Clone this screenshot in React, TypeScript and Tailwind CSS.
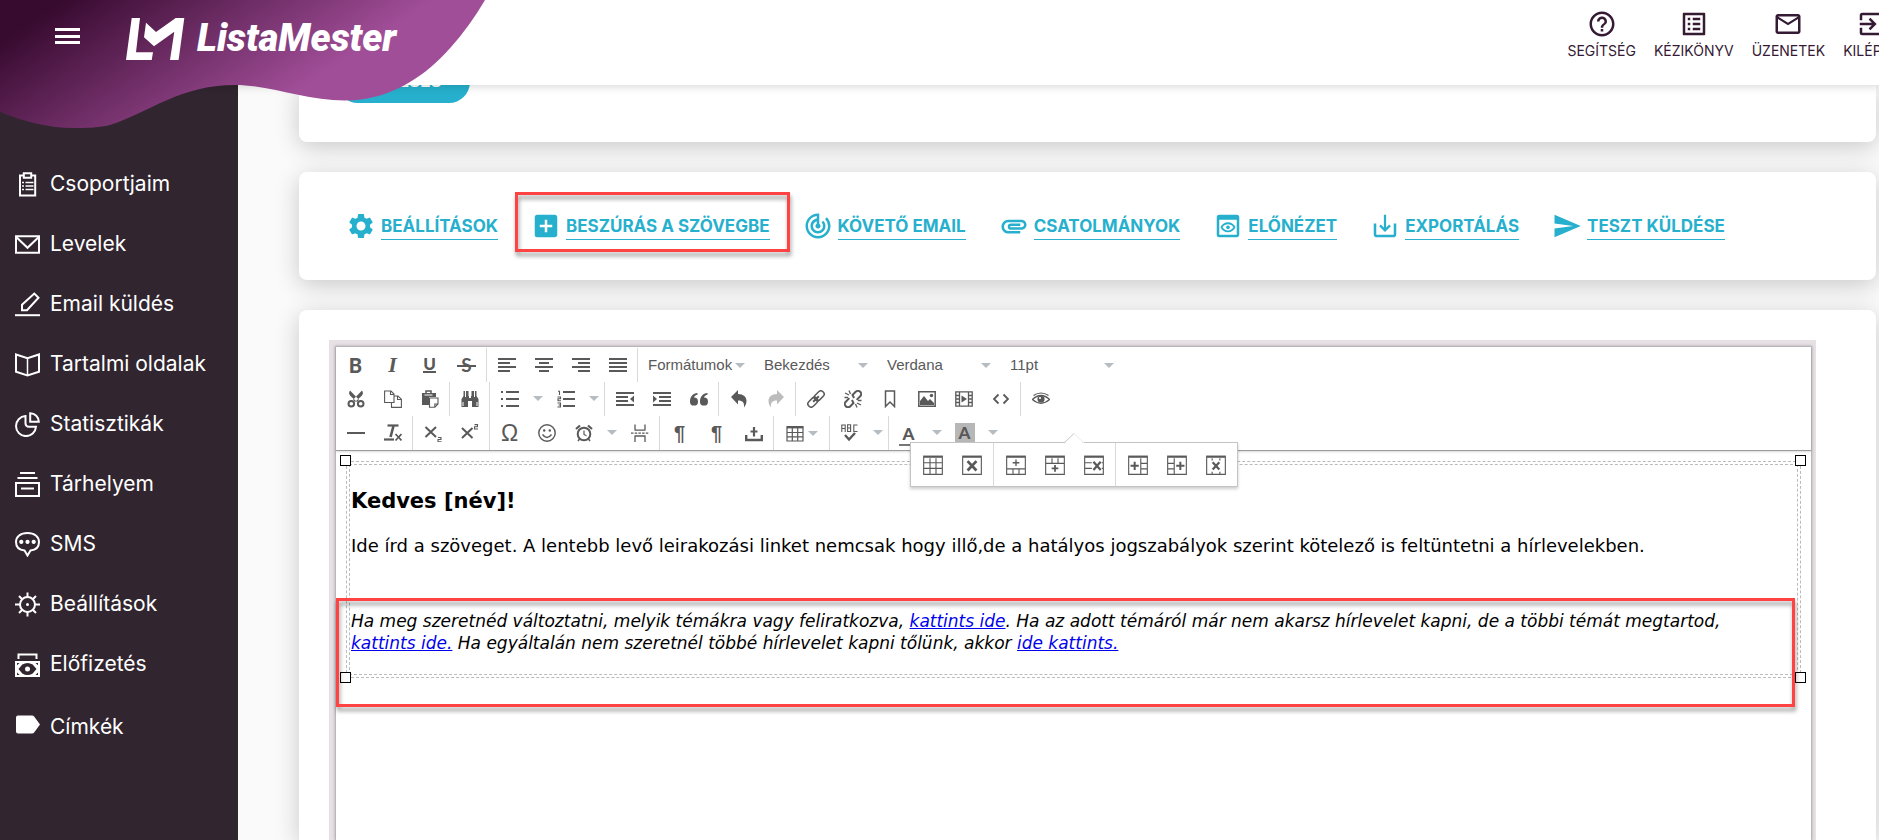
import React from "react";
import {
  MdAddBox,
  MdAttachment,
  MdExitToApp,
  MdHelpOutline,
  MdListAlt,
  MdMailOutline,
  MdOutlinePreview,
  MdSend,
  MdSettings,
  MdTrackChanges,
} from "react-icons/md";

type Kids = { children: React.ReactNode };

/* ---------- Sidebar ---------- */

function SideIcon({ children }: Kids) {
  return (
    <svg viewBox="0 0 25 25" className="size-[25px] shrink-0" fill="none" stroke="currentColor" strokeWidth="2" aria-hidden="true">
      {children}
    </svg>
  );
}

const sideItems: { label: string; icon: React.ReactNode }[] = [
  {
    label: "Csoportjaim",
    icon: (
      <>
        <path d="M8 3.500H5v20h15.200v-20H17" />
        <path d="M8.800 1.200h7.400v4.600H8.800z" />
        <path d="M7 10.500h2M10.500 10.500h8M7 14h2M10.500 14h8M7 17.500h2M10.500 17.500h8" strokeWidth="1.600" />
      </>
    ),
  },
  {
    label: "Levelek",
    icon: (
      <>
        <path d="M1 4.200h23v16.600H1z" />
        <path d="M1.500 5.200l11 10.600 11-10.600" />
      </>
    ),
  },
  {
    label: "Email küldés",
    icon: (
      <>
        <path d="M0 23.200h25" />
        <path d="M7 18.200v-5.400L19.300 1.600l4.200 4.200L12 18.200z" />
      </>
    ),
  },
  {
    label: "Tartalmi oldalak",
    icon: (
      <>
        <path d="M1 2.500l11.500 3.800L24 2.500v17.200l-11.500 3.800L1 19.700z" />
        <path d="M12.500 6v17.500" strokeWidth="1.500" />
      </>
    ),
  },
  {
    label: "Statisztikák",
    icon: (
      <>
        <path d="M10.500 4.100A10 10 0 1 0 21 14.800h-7.200a3.300 3.300 0 0 1-3.300-3.300z" />
        <path d="M15.200 1.200v8.600h8.600a8.600 8.600 0 0 0-8.600-8.600z" />
      </>
    ),
  },
  {
    label: "Tárhelyem",
    icon: (
      <>
        <path d="M5 1h15M2.500 6h20" />
        <path d="M1 11h23v13H1z" />
        <path d="M6 16.500h13" />
      </>
    ),
  },
  {
    label: "SMS",
    icon: (
      <>
        <path d="M12.500 1C5.500 1 1 4.600 1 10s3.500 8 8.500 8.500l3 5 3-5C20.500 18 24 15.400 24 10s-4.500-9-11.500-9z" />
        <path d="M6.300 7.800a2.100 2.100 0 1 0 .01 0zM12.500 7.800a2.100 2.100 0 1 0 .01 0zM18.700 7.800a2.100 2.100 0 1 0 .01 0z" fill="currentColor" stroke="none" />
      </>
    ),
  },
  {
    label: "Beállítások",
    icon: (
      <>
        <circle cx="12.500" cy="12.500" r="7.500" />
        <circle cx="12.500" cy="12.500" r="1.500" fill="currentColor" stroke="none" />
        <path d="M12.500 5V.5M12.500 20v4.500M5 12.500H0M20 12.500h5M7.200 7.200L4 4M17.800 7.200L21 4M7.200 17.800L4 21M17.800 17.800L21 21" />
      </>
    ),
  },
  {
    label: "Előfizetés",
    icon: (
      <>
        <path d="M3.500 7V2.500h18V7" />
        <path fillRule="evenodd" stroke="none" fill="currentColor" d="M0 9h25v16H0zM2 11v2.200L4.500 11zM20.500 11l2.500 2.200V11zM2 20.600V23h2.500zM23 20.600L20.500 23H23zM3.500 17l3.800-4.500Q12.500 9.500 17.700 12.500L21.500 17l-3.800 4.500Q12.500 24.500 7.300 21.500z" />
        <circle cx="12.500" cy="17" r="2.500" fill="currentColor" stroke="none" />
      </>
    ),
  },
  {
    label: "Címkék",
    icon: <path d="M3 .5h14q1.500 0 2.300 1.200L25 9.500l-5.700 7.800Q18.500 18.500 17 18.500H3q-2 0-2-2v-14q0-2 2-2z" fill="currentColor" stroke="none" />,
  },
];

function Sidebar() {
  return (
    <nav className="w-[238px] shrink-0 bg-[#31252f] pt-[69px] text-white" aria-label="Főmenü">
      <ul>
        {sideItems.map((it) => (
          <li key={it.label} className="group">
            <a href="#" className="flex h-[60px] items-center gap-[10px] pl-[15px] text-[21px] leading-6 group-last:h-[66px]">
              <SideIcon>{it.icon}</SideIcon>
              {it.label}
            </a>
          </li>
        ))}
      </ul>
    </nav>
  );
}

/* ---------- Header ---------- */

const topLinks = [
  { label: "SEGÍTSÉG", Icon: MdHelpOutline },
  { label: "KÉZIKÖNYV", Icon: MdListAlt },
  { label: "ÜZENETEK", Icon: MdMailOutline },
  { label: "KILÉPÉS", Icon: MdExitToApp },
];

function Header() {
  return (
    <header className="relative z-20 h-[85px] shrink-0 bg-white shadow-[0_2px_8px_rgba(0,0,0,0.15)]">
      <svg className="absolute left-0 top-0 h-[130px] w-[486px]" viewBox="0 0 486 130" aria-hidden="true">
        <defs>
          <linearGradient id="wave" gradientUnits="userSpaceOnUse" x1="19" y1="29" x2="133" y2="201">
            <stop offset="0" stopColor="#370a2f" />
            <stop offset="1" stopColor="#a14e98" />
          </linearGradient>
        </defs>
        <path
          fill="url(#wave)"
          d="M0 0H485C465 34 438 66 410 82C392 93 370 100.500 345 100.500C305 100.500 270 85 235 85C180 85 150 112 110 125C97 128 84 128 75 128C45 128 20 120 0 112Z"
        />
      </svg>
      <div className="relative flex h-full items-start overflow-hidden">
        <button type="button" aria-label="Menü" className="ml-[55px] mt-7 flex h-4 w-[25px] flex-col justify-between">
          <span className="h-[3px] w-full bg-white" />
          <span className="h-[3px] w-full bg-white" />
          <span className="h-[3px] w-full bg-white" />
        </button>
        <a href="#" className="ml-[46px] mt-[17px] flex h-[43px] items-center gap-3 text-white">
          <svg viewBox="0 0 59 43" className="h-[43px] w-[59px]" fill="currentColor" aria-hidden="true">
            <path d="M5.700 1H14l-4 34.300h17L25.700 43H0z" />
            <path d="M20 5.700l10 9.300L49.700 1h8.600l-5.700 42H44l4.300-28.300L28 29.300l-10-9z" />
          </svg>
          <span className="font-[Roboto,sans-serif] text-[38px] font-black italic leading-[43px]">ListaMester</span>
        </a>
        <nav aria-label="Felső menü" className="-mr-[20px] ml-auto mt-[9px] flex shrink-0 gap-[18px] text-[#351a33]">
          {topLinks.map(({ label, Icon }) => (
            <a key={label} href="#" className="flex flex-col items-center text-[14px] leading-6">
              <Icon className="size-[30px]" aria-hidden="true" />
              {label}
            </a>
          ))}
        </nav>
      </div>
    </header>
  );
}

/* ---------- Action links ---------- */

function ExportIcon({ className }: { className?: string }) {
  return (
    <svg viewBox="0 0 24 24" className={className} fill="none" stroke="currentColor" strokeWidth="2" aria-hidden="true">
      <path d="M4 10v8.500A1.500 1.500 0 0 0 5.500 20h13a1.500 1.500 0 0 0 1.500-1.500V10" />
      <path d="M12 3v12M8 11.500l4 4 4-4" strokeWidth="1.800" />
    </svg>
  );
}

const actions = [
  { label: "BEÁLLÍTÁSOK", Icon: MdSettings },
  { label: "BESZÚRÁS A SZÖVEGBE", Icon: MdAddBox, marked: true },
  { label: "KÖVETŐ EMAIL", Icon: MdTrackChanges },
  { label: "CSATOLMÁNYOK", Icon: MdAttachment },
  { label: "ELŐNÉZET", Icon: MdOutlinePreview },
  { label: "EXPORTÁLÁS", Icon: ExportIcon },
  { label: "TESZT KÜLDÉSE", Icon: MdSend },
];

function Actions() {
  return (
    <section className="mt-[30px] flex h-[108px] shrink-0 items-center gap-[33px] rounded-lg bg-white pl-[47px] text-[#26b0cd] shadow-[0_5px_25px_rgba(0,0,0,0.2)]">
      {actions.map(({ label, Icon, marked }) => (
        <a key={label} href="#" className="relative flex shrink-0 items-center gap-[5px]">
          <Icon className="size-[30px]" aria-hidden="true" />
          <span className="border-b border-current pt-px text-[17px] font-bold leading-[26px]">{label}</span>
          {marked && (
            <span className="pointer-events-none absolute -bottom-[11px] -left-4 -right-[20px] -top-[19px] border-[3px] border-[#ff4343] drop-shadow-[1px_4px_2px_rgba(0,0,0,0.4)]" />
          )}
        </a>
      ))}
    </section>
  );
}

/* ---------- Editor toolbar ---------- */

function Glyph({ children }: Kids) {
  return (
    <svg viewBox="0 0 18 18" className="size-[18px]" fill="none" stroke="currentColor" strokeWidth="1.500" aria-hidden="true">
      {children}
    </svg>
  );
}

function Bars({ d }: { d: string }) {
  return (
    <Glyph>
      <path d={d} strokeWidth="2" />
    </Glyph>
  );
}

function Btn({ label, children, dim }: Kids & { label: string; dim?: boolean }) {
  return (
    <button type="button" aria-label={label} className={"flex h-[34px] w-[37px] items-center justify-center " + (dim ? "opacity-40" : "")}>
      {children}
    </button>
  );
}

function Caret() {
  return <span className="block h-0 w-0 border-x-[5px] border-t-[5px] border-x-transparent border-t-[#b5bcc2]" />;
}

function Split({ label, children }: Kids & { label: string }) {
  return (
    <div className="flex">
      <Btn label={label}>{children}</Btn>
      <button type="button" aria-label={label + " – lehetőségek"} className="flex h-8 w-[19px] items-center justify-center">
        <Caret />
      </button>
    </div>
  );
}

function Group({ children }: Kids) {
  return <div className="flex border-l border-[#d9d9d9] px-px first:border-l-0">{children}</div>;
}

function Pick({ label, value, width }: { label: string; value: string; width: string }) {
  return (
    <label className={"relative flex items-center " + width}>
      <select aria-label={label} defaultValue={value} className="h-[34px] w-full appearance-none bg-transparent pl-[9px] text-[15px] outline-none">
        <option>{value}</option>
      </select>
      <span className="pointer-events-none absolute right-[10px]">
        <Caret />
      </span>
    </label>
  );
}

const grid = "M1 4v13h16V4M1 8.500h16M1 12.800h16M6.300 4v13M11.700 4v13";

function Toolbar() {
  return (
    <div className="border-b border-[#9b9b9b] bg-white pt-px font-['Liberation_Sans',Arial,sans-serif] text-[#595959] shadow-[0_1px_2px_rgba(0,0,0,0.15)]">
      <div className="flex h-[34px]">
        <Group>
          <Btn label="Félkövér"><span className="font-[Lato,sans-serif] text-[20px] font-black leading-5">B</span></Btn>
          <Btn label="Dőlt"><span className="font-['Liberation_Serif',serif] text-[22px] font-bold italic leading-5">I</span></Btn>
          <Btn label="Aláhúzott"><span className="border-b-2 border-current font-[Lato,sans-serif] text-[17px] font-black leading-[14px]">U</span></Btn>
          <Btn label="Áthúzott">
            <span className="relative font-[Lato,sans-serif] text-[19px] font-bold leading-5">
              S
              <span className="absolute -inset-x-1 top-[10px] h-[2px] bg-current" />
            </span>
          </Btn>
        </Group>
        <Group>
          <Btn label="Balra igazít"><Bars d="M0 3h18M0 7h12M0 11h18M0 15h12" /></Btn>
          <Btn label="Középre igazít"><Bars d="M0 3h18M4 7h10M0 11h18M4 15h10" /></Btn>
          <Btn label="Jobbra igazít"><Bars d="M0 3h18M6 7h12M0 11h18M6 15h12" /></Btn>
          <Btn label="Sorkizárt"><Bars d="M0 3h18M0 7h18M0 11h18M0 15h18" /></Btn>
        </Group>
        <Group>
          <Pick label="Formátumok" value="Formátumok" width="w-[116px]" />
          <Pick label="Bekezdés" value="Bekezdés" width="w-[123px]" />
          <Pick label="Betűtípus" value="Verdana" width="w-[123px]" />
          <Pick label="Betűméret" value="11pt" width="w-[123px]" />
        </Group>
      </div>

      <div className="flex h-[34px]">
        <Group>
          <Btn label="Kivágás">
            <Glyph>
              <path d="M3 .5C1.500 2.500 2 4.500 3.500 6L10 12l2-2.200zM15 .5C16.500 2.500 16 4.500 14.500 6L8 12 6 9.800z" fill="currentColor" stroke="none" />
              <circle cx="4.300" cy="13.700" r="2.800" strokeWidth="2" />
              <circle cx="13.700" cy="13.700" r="2.800" strokeWidth="2" />
            </Glyph>
          </Btn>
          <Btn label="Másolás">
            <Glyph>
              <path d="M.6 1h6.400l3 3v8.500H.6zM6.500 1v3.500H10M10 6h4l3.400 3.200V17.400H7.500v-5M13.500 6v3.500h3.800" strokeWidth="1.100" />
            </Glyph>
          </Btn>
          <Btn label="Beillesztés">
            <Glyph>
              <path d="M1 3h14v4H8v8H1z" fill="currentColor" stroke="none" />
              <path d="M5 3V1h5v2" />
              <path d="M3.500 5h8" stroke="#fff" strokeWidth="1" />
              <path d="M8.500 8h8.500v6l-3.200 3.300H8.500zM17 14h-3.200v3.300" strokeWidth="1.100" />
            </Glyph>
          </Btn>
        </Group>
        <Group>
          <Btn label="Keresés">
            <Glyph>
              <path d="M2.500 1h5v5H8v2h2V6h.5V1h5v5L17.500 9v8H11v-6H7v6H.5V9L2.500 6z" fill="currentColor" stroke="none" />
              <path d="M4.500 1v6M13.500 1v6M2 12v4M16 12v4" stroke="#fff" strokeWidth="1" />
            </Glyph>
          </Btn>
        </Group>
        <Group>
          <Split label="Felsorolás"><Bars d="M0 2h2M5 2h13M0 9h2M5 9h13M0 16h2M5 16h13" /></Split>
          <Split label="Számozás">
            <Glyph>
              <path d="M6 2h12M6 9h12M6 16h12" strokeWidth="2" />
              <path d="M1 1.200h1.500V5M.5 7h3v1.800H1v2h3M.5 13h3v4H.5M1.500 15h2" strokeWidth="1.100" />
            </Glyph>
          </Split>
        </Group>
        <Group>
          <Btn label="Behúzás csökkentése">
            <Glyph>
              <path d="M0 3h18M0 7h12M0 11h12M0 15h18" strokeWidth="2" />
              <path d="M18 5.500v7L14 9z" fill="currentColor" stroke="none" />
            </Glyph>
          </Btn>
          <Btn label="Behúzás növelése">
            <Glyph>
              <path d="M0 3h18M6 7h12M6 11h12M0 15h18" strokeWidth="2" />
              <path d="M0 5.500v7L4 9z" fill="currentColor" stroke="none" />
            </Glyph>
          </Btn>
          <Btn label="Idézet">
            <Glyph>
              <path d="M7.500 3C3 3.500 0 6.500 0 11.500A4 4 0 1 0 4 7.600C4.500 6 5.600 5 7.500 4.800zM17.500 3C13 3.500 10 6.500 10 11.500a4 4 0 1 0 4-3.900c.5-1.600 1.600-2.600 3.500-2.800z" fill="currentColor" stroke="none" />
            </Glyph>
          </Btn>
        </Group>
        <Group>
          <Btn label="Visszavonás">
            <Glyph>
              <path d="M8 0v4c5.500 0 8.500 3 8.500 7 0 2.500-1 4.500-2.500 6.500.5-4.500-1-7-6-7v4L1 7z" fill="currentColor" stroke="none" />
            </Glyph>
          </Btn>
          <Btn label="Ismét" dim>
            <Glyph>
              <path d="M10 0v4C4.500 4 1.500 7 1.500 11c0 2.500 1 4.500 2.500 6.500-.5-4.500 1-7 6-7v4L17 7z" fill="currentColor" stroke="none" />
            </Glyph>
          </Btn>
        </Group>
        <Group>
          <Btn label="Hivatkozás">
            <Glyph>
              <g transform="rotate(-45 9 9)">
                <rect x="-1" y="5.800" width="11" height="6.400" rx="3" />
                <rect x="8" y="5.800" width="11" height="6.400" rx="3" />
                <path d="M5 9h8" strokeWidth="2" />
              </g>
            </Glyph>
          </Btn>
          <Btn label="Hivatkozás törlése">
            <Glyph>
              <g transform="rotate(-45 9 9)">
                <path d="M7 5.800H2a3.200 3.200 0 0 0 0 6.400h4.500L7.500 9M11 12.200h5a3.200 3.200 0 0 0 0-6.400h-4.500L10.500 9" strokeWidth="2" />
              </g>
              <path d="M1 3l4 2M5 .5l1.500 3.500M.5 7.500H4M17 15l-4-2M13 17.500L11.500 14M17.500 10.500H14" strokeWidth="1.300" />
            </Glyph>
          </Btn>
          <Btn label="Könyvjelző"><Glyph><path d="M4.500 1h9v15.500L9 12l-4.500 4.500z" /></Glyph></Btn>
          <Btn label="Kép">
            <Glyph>
              <path d="M.8 1.800h16.400v14.400H.8z" />
              <path d="M2 15V11l4-5 4 5 2-2 4 4v2z" fill="currentColor" stroke="none" />
              <circle cx="13.500" cy="5.500" r="1.700" fill="currentColor" stroke="none" />
            </Glyph>
          </Btn>
          <Btn label="Média">
            <Glyph>
              <path d="M.8 1.800h16.400v14.400H.8zM4.500 1.800v14.400M13.500 1.800v14.400M1 5.500h3.500M1 9h3.500M1 12.500h3.500M13.500 5.500H17M13.500 9H17M13.500 12.500H17" strokeWidth="1.300" />
              <path d="M6.500 5.500v7L12 9z" fill="currentColor" stroke="none" />
            </Glyph>
          </Btn>
          <Btn label="Forráskód"><Glyph><path d="M6.500 4.500L2 9l4.500 4.500M11.500 4.500L16 9l-4.500 4.500" strokeWidth="1.800" /></Glyph></Btn>
        </Group>
        <Group>
          <Btn label="Előnézet">
            <Glyph>
              <path d="M.3 9.500Q9 1.500 17.700 9.500Q9 17 .3 9.500z" strokeWidth="1.300" />
              <path d="M1.500 5.500Q9 .5 16.500 5.500" strokeWidth="1.200" />
              <circle cx="9" cy="9" r="3.600" fill="currentColor" stroke="none" />
              <circle cx="8" cy="8" r="1.100" fill="#fff" stroke="none" />
            </Glyph>
          </Btn>
        </Group>
      </div>

      <div className="flex h-[34px]">
        <Group>
          <Btn label="Vízszintes vonal"><Bars d="M0 9h18" /></Btn>
          <Btn label="Formázás törlése">
            <Glyph>
              <path d="M3.500 1.500h11" strokeWidth="2.200" />
              <path d="M9.500 2L6.500 13" strokeWidth="2.600" />
              <path d="M0 15.500h10" strokeWidth="2.200" />
              <path d="M11.500 10l6 6.500M17.500 10l-6 6.500" strokeWidth="1.700" />
            </Glyph>
          </Btn>
        </Group>
        <Group>
          <Btn label="Alsó index">
            <Glyph>
              <path d="M1.500 3l10.500 10M12 3L1.500 13" strokeWidth="2" />
              <path d="M14 13.500h3v2h-3v2.300h3.500" strokeWidth="1.100" />
            </Glyph>
          </Btn>
          <Btn label="Felső index">
            <Glyph>
              <path d="M1 4l10.500 10M11.500 4L1 14" strokeWidth="2" />
              <path d="M13.500.6h3v2.200h-3V5H17" strokeWidth="1.100" />
            </Glyph>
          </Btn>
        </Group>
        <Group>
          <Btn label="Speciális karakter"><span className="font-['Liberation_Sans',sans-serif] text-[23px] leading-6">Ω</span></Btn>
          <Btn label="Hangulatjel">
            <Glyph>
              <circle cx="9" cy="9" r="8.200" strokeWidth="1.400" />
              <path d="M4.500 10.500Q9 16.500 13.500 10.500" strokeWidth="1.400" />
              <circle cx="6.200" cy="6.500" r="1.200" fill="currentColor" stroke="none" />
              <circle cx="11.800" cy="6.500" r="1.200" fill="currentColor" stroke="none" />
            </Glyph>
          </Btn>
          <Split label="Dátum beszúrása">
            <Glyph>
              <circle cx="9" cy="10" r="6.300" strokeWidth="2" />
              <path d="M9 6.500V10.500l2.500 1.300" strokeWidth="1.200" />
              <path d="M1 5l4-3.500M17 5l-4-3.500" strokeWidth="2.200" />
              <path d="M4.500 15L3 17M13.500 15l1.500 2" />
            </Glyph>
          </Split>
          <Btn label="Oldaltörés">
            <Glyph>
              <path d="M4 .5V6M14 .5V6M3.500 6.200h11M3.500 12h11M4 12v6M14 12v6" strokeWidth="1.300" />
              <path d="M0 9.200h18" strokeDasharray="2.500 1.200" strokeWidth="1.300" />
            </Glyph>
          </Btn>
        </Group>
        <Group>
          <Btn label="Balról jobbra"><span className="font-['Liberation_Sans',sans-serif] text-[20px] font-bold leading-5">¶</span></Btn>
          <Btn label="Jobbról balra"><span className="font-['Liberation_Sans',sans-serif] text-[20px] font-bold leading-5">¶</span></Btn>
          <Btn label="Feltöltés">
            <Glyph>
              <path d="M1.200 11v5h15.600v-5" strokeWidth="2.400" />
              <path d="M9 3v9.500M5.500 7.500h7" strokeWidth="2.200" />
            </Glyph>
          </Btn>
        </Group>
        <Group>
          <button type="button" aria-label="Táblázat" className="flex h-[34px] w-[53px] items-center justify-center">
            <Glyph>
              <path d={grid} strokeWidth="1.200" />
              <path d="M.4 3.200h17.200" strokeWidth="2.400" />
            </Glyph>
            <span className="ml-1"><Caret /></span>
          </button>
        </Group>
        <Group>
          <Split label="Helyesírás">
            <Glyph>
              <path d="M.8 8V1h3.400v7M.8 4.500h3.400M6.600.8h3v6.700h-3zM6.600 4h3M16.500 1h-3.700v6.500h3.700" strokeWidth="1.100" />
              <path d="M4 11l4 4.500L14 9" strokeWidth="2.400" />
            </Glyph>
          </Split>
        </Group>
        <Group>
          <Split label="Szövegszín">
            <span className="mt-1 border-b-2 border-[#777] px-1 font-[Lato,sans-serif] text-[17px] font-black leading-5">A</span>
          </Split>
          <Split label="Háttérszín">
            <span className="size-5 bg-[#b7b7b7] font-[Lato,sans-serif] text-[17px] font-black leading-5">A</span>
          </Split>
        </Group>
      </div>
    </div>
  );
}

/* ---------- Floating table toolbar ---------- */

const tableTools: { label: string; d: string; mark: string; w: string }[][] = [
  [
    { label: "Táblázat tulajdonságai", d: "M.6 2v15.400h16.800V2M.6 7h16.800M.6 12h16.800M6.300 3v14M11.700 3v14", mark: "", w: "1" },
    { label: "Táblázat törlése", d: "M.6 2v15.400h16.800V2", mark: "M5 5.500l8 8.500M13 5.500L5 14", w: "2.500" },
  ],
  [
    { label: "Sor beszúrása elé", d: "M.6 2v15.400h16.800V2M.6 12.500h16.800M6.300 12.500v5M11.700 12.500v5", mark: "M9 4v6M6 7h6", w: "1.200" },
    { label: "Sor beszúrása mögé", d: "M.6 2v15.400h16.800V2M.6 7.500h16.800M6.300 3v4.500M11.700 3v4.500", mark: "M9 9v6M6 12h6", w: "1.600" },
    { label: "Sor törlése", d: "M.6 2v15.400h16.800V2M.6 7h6.500M.6 12h6.500M16 7h1.500M16 12h1.500", mark: "M8.500 6l6.500 7.500M15 6l-6.500 7.500", w: "2" },
  ],
  [
    { label: "Oszlop beszúrása elé", d: "M.6 2v15.400h16.800V2M11.500 3v14M11.500 7.500h6M11.500 12.500h6", mark: "M6 6v7.500M2.300 9.700h7.400", w: "1.800" },
    { label: "Oszlop beszúrása mögé", d: "M.6 2v15.400h16.800V2M6.500 3v14M.6 7.500h6M.6 12.500h6", mark: "M12 6v7.500M8.300 9.700h7.400", w: "1.800" },
    { label: "Oszlop törlése", d: "M.6 2v15.400h16.800V2M5.500 3v2M12.500 3v2M5.500 15v2M12.500 15v2", mark: "M6 6.500l6 6.500M12 6.500L6 13", w: "2" },
  ],
];

function TablePopup() {
  return (
    <div role="toolbar" aria-label="Táblázat eszközök" className="absolute left-[574px] top-[95px] z-10 flex h-[45px] border border-[#c4c4c4] bg-white text-[#595959] shadow-[0_2px_3px_rgba(0,0,0,0.2)]">
      <svg viewBox="0 0 20 11" className="absolute -top-[10px] left-[153px] h-[11px] w-5" aria-hidden="true">
        <path d="M0 11L10 .5 20 11z" fill="#fff" />
        <path d="M0 10L10 .5" stroke="#c4c4c4" />
        <path d="M10 .5L20 10" stroke="#ececec" />
      </svg>
      {tableTools.map((group) => (
        <div key={group[0].label} className="flex border-l border-[#d9d9d9] px-[2px] first-of-type:border-l-0">
          {group.map((t) => (
            <button key={t.label} type="button" aria-label={t.label} className="flex w-[39px] items-center justify-center">
              <svg viewBox="0 0 18 18" className="size-5" fill="none" stroke="currentColor" aria-hidden="true">
                <path d={t.d} strokeWidth="1" />
                <path d="M.1 1.500h17.800" strokeWidth="2" />
                {t.mark && <path d={t.mark} strokeWidth={t.w} />}
              </svg>
            </button>
          ))}
        </div>
      ))}
    </div>
  );
}

/* ---------- Letter ---------- */

function Handle({ place }: { place: string }) {
  return <span className={"absolute size-[11px] border border-black bg-white " + place} />;
}

const link = "text-[#0000ee] underline";

function Letter() {
  return (
    <div className="p-[10px] font-['DejaVu_Sans',Verdana,sans-serif] text-[18px] leading-[22px] text-black">
      <div className="relative border border-dashed border-[#bbb] p-[2px]">
        <div className="border border-dashed border-[#bbb] px-px pb-[20px] pt-[24px]">
          <h1 className="text-[21px] font-bold leading-6">Kedves [név]!</h1>
          <p className="mt-[22px]">
            Ide írd a szöveget. A lentebb levő leirakozási linket nemcsak hogy illő,de a hatályos jogszabályok szerint kötelező is feltüntetni a hírlevelekben.
          </p>
          <p className="mt-[53px] text-[17px] italic">
            Ha meg szeretnéd változtatni, melyik témákra vagy feliratkozva, <a href="#" className={link}>kattints ide</a>. Ha az adott témáról már nem akarsz hírlevelet kapni, de a többi témát megtartod,
            <br />
            <a href="#" className={link}>kattints ide.</a> Ha egyáltalán nem szeretnél többé hírlevelet kapni tőlünk, akkor <a href="#" className={link}>ide kattints.</a>
          </p>
        </div>
        <Handle place="-left-[7px] -top-[7px]" />
        <Handle place="-right-[6px] -top-[7px]" />
        <Handle place="-bottom-[6px] -left-[7px]" />
        <Handle place="-bottom-[6px] -right-[6px]" />
        <span className="pointer-events-none absolute -bottom-[30px] -left-[11px] right-[5px] top-[136px] border-[3px] border-[#ff4343] drop-shadow-[1px_4px_2px_rgba(0,0,0,0.4)]" />
      </div>
    </div>
  );
}

export default function App() {
  return (
    <div className="flex h-screen flex-col overflow-hidden bg-[#fafafa] font-[Inter,sans-serif]">
      <Header />
      <div className="flex min-h-0 flex-1">
        <Sidebar />
        <main className="flex min-w-0 flex-1 flex-col pl-[61px] pr-[3px]">
          <section className="flex h-[57px] shrink-0 items-start rounded-b-lg bg-white pl-[38px] shadow-[0_5px_25px_rgba(0,0,0,0.2)]">
            <button type="button" className="-mt-6 h-[42px] rounded-full bg-[#26b0cd] px-7 text-[17px] font-bold text-white">KERESÉS</button>
          </section>
          <Actions />
          <section className="mt-[30px] flex flex-1 flex-col rounded-t-lg bg-white pl-[30px] pr-[60px] pt-[30px] shadow-[0_5px_25px_rgba(0,0,0,0.2)]">
            <div className="flex flex-1 flex-col bg-[#e7e1e5] pl-[6px] pr-1 pt-[6px]">
              <div className="relative flex-1 border border-b-0 border-[#b8b8b8] bg-white shadow-[0_0_3px_rgba(0,0,0,0.25)]">
                <Toolbar />
                <TablePopup />
                <Letter />
              </div>
            </div>
          </section>
        </main>
      </div>
    </div>
  );
}
